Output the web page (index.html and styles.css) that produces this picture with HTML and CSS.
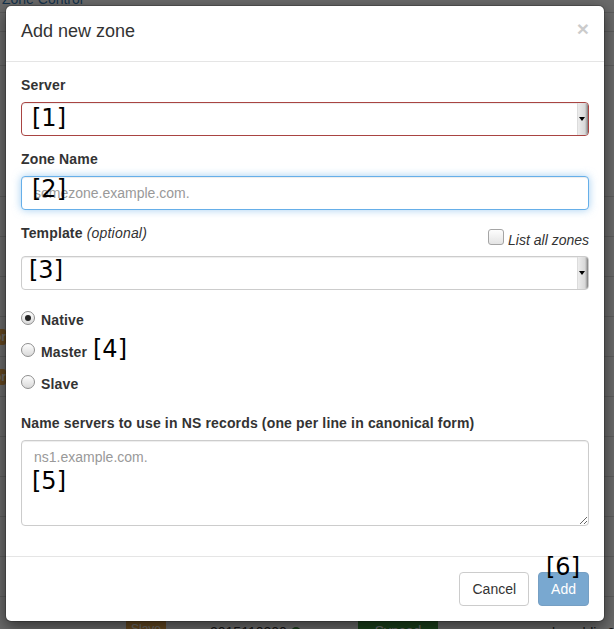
FILE: index.html
```html
<!DOCTYPE html>
<html>
<head>
<meta charset="utf-8">
<title>Add new zone</title>
<link rel="stylesheet" href="styles.css">
</head>
<body>
<div class="page">
  <div class="page-top"><a class="brand">Zone Control</a></div>
  <div class="page-nav"></div>
  <div class="page-heading"></div>
  <div class="page-panel"></div>
  <div class="trow"></div>
  <div class="trow"></div>
  <div class="trow"></div>
  <div class="trow"><span class="side-badge">Error</span></div>
  <div class="trow"><span class="side-badge">Error</span></div>
  <div class="trow"></div>
  <div class="trow"></div>
  <div class="trow"></div>
  <div class="trow"></div>
  <div class="trow"></div>
  <div class="trow trow-last">
    <span class="cell c1"><span class="warn-badge">Slave</span></span>
    <span class="cell c2">2015110300 <span class="dot"></span></span>
    <span class="cell c3"><span class="ok-btn">Synced</span></span>
    <span class="cell c4">example public 2</span>
  </div>
</div>
<div class="backdrop"></div>

<div class="modal">
  <div class="modal-header">
    <h4 class="modal-title">Add new zone</h4>
    <span class="close">×</span>
  </div>
  <div class="modal-body">
    <div class="group">
      <label class="lbl">Server</label>
      <div class="control select has-error"><span class="select-value"></span><span class="select-arrow"><span class="caret"></span></span></div>
    </div>
    <div class="group">
      <label class="lbl">Zone Name</label>
      <input class="control input focus" type="text" placeholder="somezone.example.com.">
    </div>
    <div class="group">
      <div class="template-row">
        <label class="lbl lbl-inline">Template <em class="opt">(optional)</em></label>
        <label class="check"><span class="checkbox"></span><span class="check-text">List all zones</span></label>
      </div>
      <div class="control select"><span class="select-value"></span><span class="select-arrow"><span class="caret"></span></span></div>
    </div>
    <div class="radios">
      <label class="radio"><span class="radio-dot checked"></span>Native</label>
      <label class="radio"><span class="radio-dot"></span>Master</label>
      <label class="radio"><span class="radio-dot"></span>Slave</label>
    </div>
    <div class="group group-last">
      <label class="lbl">Name servers to use in NS records (one per line in canonical form)</label>
      <textarea class="control textarea" placeholder="ns1.example.com."></textarea>
    </div>
  </div>
  <div class="modal-footer">
    <button class="btn btn-default">Cancel</button>
    <button class="btn btn-primary">Add</button>
  </div>
</div>

<span class="note n1">[1]</span>
<span class="note n2">[2]</span>
<span class="note n3">[3]</span>
<span class="note n4">[4]</span>
<span class="note n5">[5]</span>
<span class="note n6">[6]</span>
</body>
</html>
```

FILE: styles.css
```css
html, body {
  margin: 0;
  padding: 0;
}
body {
  width: 614px;
  height: 629px;
  overflow: hidden;
  position: relative;
  background: #fff;
  font-family: "Liberation Sans", Arial, sans-serif;
  font-size: 14px;
  line-height: 20px;
  color: #333;
}

/* ---------- background page ---------- */
.page {
  width: 614px;
}
.page-top {
  height: 23px;
  border-bottom: 1px solid #ddd;
}
.brand {
  display: block;
  margin-top: -11px;
  padding-left: 2px;
  line-height: 20px;
  color: #337ab7;
}
.page-nav {
  height: 18px;
  border-bottom: 1px solid #ddd;
}
.page-heading {
  height: 33px;
  border-bottom: 1px solid #ddd;
}
.page-panel {
  height: 130px;
  border-bottom: 1px solid #ddd;
}
.trow {
  height: 39px;
  border-bottom: 1px solid #ddd;
  display: flex;
  align-items: center;
}
.trow-last {
  align-items: flex-start;
  padding-top: 15px;
  height: 40px;
}
.side-badge {
  margin-left: -30px;
  width: 36px;
  height: 16px;
  background: #f0ad4e;
  color: #fff;
  font-size: 12px;
  font-weight: bold;
  line-height: 16px;
  text-align: right;
  border-radius: 0 3px 3px 0;
  overflow: hidden;
}
.cell { display: block; flex: none; }
.c1 { width: 210px; }
.c1 .warn-badge {
  display: block;
  margin-left: 126px;
  margin-top: 3px;
  padding-top: 6px;
  width: 40px;
  height: 20px;
  background: #f0ad4e;
  border-radius: 3px;
  color: #fff;
  font-size: 12px;
  line-height: 16px;
  text-align: center;
}
.c2 { width: 148px; color: #333; margin-top: 10px; }
.dot {
  display: inline-block;
  width: 10px;
  height: 10px;
  border-radius: 50%;
  background: #3c8a3c;
}
.c3 { width: 152px; }
.ok-btn {
  display: block;
  width: 80px;
  height: 30px;
  line-height: 38px;
  background: #449d44;
  border-radius: 3px;
  color: #fff;
  text-align: center;
}
.c4 { color: #333; margin-top: 11px; }

.backdrop {
  position: absolute;
  left: 0;
  top: 0;
  width: 614px;
  height: 629px;
  background: rgba(0, 0, 0, 0.58);
}

/* ---------- modal ---------- */
.modal {
  position: absolute;
  left: 5px;
  top: 5px;
  width: 600px;
  box-sizing: border-box;
  background: #fff;
  background-clip: padding-box;
  border: 1px solid rgba(0, 0, 0, 0.2);
  border-radius: 6px;
  box-shadow: 0 5px 15px rgba(0, 0, 0, 0.5);
}
.modal-header {
  display: flex;
  justify-content: space-between;
  align-items: flex-start;
  padding: 14px 15px 19px;
  border-bottom: 1px solid #e5e5e5;
}
.modal-title {
  margin: 0;
  font-size: 18px;
  line-height: 22px;
  font-weight: normal;
  color: #333;
}
.close {
  font-size: 21px;
  font-weight: bold;
  line-height: 21px;
  color: #000;
  opacity: 0.2;
  margin-top: -2px;
}
.modal-body {
  padding: 13px 15px 30px;
}
.group {
  margin-bottom: 13px;
}
.group-last {
  margin-bottom: 0;
}
.lbl {
  display: block;
  font-weight: bold;
  letter-spacing: 0.15px;
  margin-bottom: 7px;
}
.lbl-inline {
  margin-bottom: 0;
}
.opt {
  font-weight: normal;
  font-style: italic;
  letter-spacing: 0.2px;
}
.control {
  display: block;
  width: 100%;
  height: 34px;
  box-sizing: border-box;
  border: 1px solid #ccc;
  border-radius: 4px;
  padding: 6px 12px;
  font-family: "Liberation Sans", Arial, sans-serif;
  font-size: 14px;
  line-height: 20px;
  color: #555;
  background: #fff;
  box-shadow: inset 0 1px 1px rgba(0, 0, 0, 0.075);
  margin: 0;
}
.control::placeholder {
  color: #999;
  opacity: 1;
}
.has-error {
  border-color: #a94442;
}
.focus {
  outline: none;
  border-color: #66afe9;
  box-shadow: inset 0 1px 1px rgba(0, 0, 0, 0.075), 0 0 8px rgba(102, 175, 233, 0.6);
}
.select {
  display: flex;
  padding: 0;
  overflow: hidden;
}
.select-value {
  flex: 1;
}
.select-arrow {
  width: 10px;
  flex: none;
  display: flex;
  align-items: center;
  justify-content: center;
  background: linear-gradient(to right, #ececec, #d8d8d8 70%, #9a9a9a 92%, #777);
  border-left: 1px solid #dcdcdc;
}
.caret {
  width: 0;
  height: 0;
  border-left: 3px solid transparent;
  border-right: 3px solid transparent;
  border-top: 4px solid #000;
  margin-right: 2px;
}
.template-row {
  display: flex;
  justify-content: space-between;
  align-items: flex-start;
  margin-bottom: 6px;
}
.check {
  display: flex;
  align-items: flex-start;
  gap: 4px;
  margin-top: 7px;
  font-style: italic;
}
.checkbox {
  width: 14px;
  height: 14px;
  margin-top: -1px;
  border: 1px solid #a5a5a5;
  border-radius: 3px;
  background: linear-gradient(#fdfdfd, #e4e4e4);
}
.radios {
  padding-top: 7px;
  margin-bottom: 19px;
}
.radio {
  display: flex;
  align-items: flex-start;
  gap: 6px;
  height: 20px;
  font-weight: bold;
  letter-spacing: 0.15px;
  margin-bottom: 12px;
}
.radio:last-child {
  margin-bottom: 0;
}
.radio-dot {
  position: relative;
  width: 12px;
  height: 12px;
  margin-top: 1px;
  border: 1px solid #8e8e8e;
  border-radius: 50%;
  background: linear-gradient(#fefefe, #d9d9d9);
}
.radio-dot.checked::after {
  content: "";
  position: absolute;
  left: 3px;
  top: 3px;
  width: 6px;
  height: 6px;
  border-radius: 50%;
  background: #222;
}
.textarea {
  height: 86px;
  resize: vertical;
}
.modal-footer {
  display: flex;
  justify-content: flex-end;
  gap: 9px;
  padding: 15px;
  border-top: 1px solid #e5e5e5;
}
.btn {
  height: 34px;
  box-sizing: border-box;
  padding: 6px 12px;
  font-family: "Liberation Sans", Arial, sans-serif;
  font-size: 14px;
  line-height: 20px;
  border: 1px solid transparent;
  border-radius: 4px;
  margin: 0;
}
.btn-default {
  background: #fff;
  border-color: #ccc;
  color: #333;
}
.btn-primary {
  background: #337ab7;
  border-color: #2e6da4;
  color: #fff;
  opacity: 0.65;
}

/* ---------- annotations ---------- */
.note {
  position: absolute;
  font-family: "DejaVu Sans", sans-serif;
  font-size: 24px;
  line-height: 28px;
  color: #000;
}
.n1 { left: 32px; top: 104px; }
.n2 { left: 32px; top: 175px; }
.n3 { left: 29px; top: 256px; }
.n4 { left: 93px; top: 335px; }
.n5 { left: 32px; top: 467px; }
.n6 { left: 546px; top: 553px; }
```
